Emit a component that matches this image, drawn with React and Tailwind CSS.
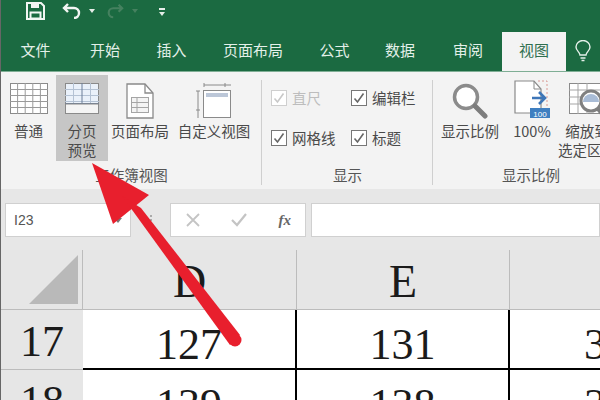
import React from 'react';

const TABS = [
  { label: '文件', w: 'w-[69px]' },
  { label: '开始', w: 'w-[70px]' },
  { label: '插入', w: 'w-[63px]' },
  { label: '页面布局', w: 'w-[100px]' },
  { label: '公式', w: 'w-[63px]' },
  { label: '数据', w: 'w-[68px]' },
  { label: '审阅', w: 'w-[68px]' },
];

function GridIcon({ className, split }) {
  const xs = split ? [8.5, 17, 25.5] : [7.6, 15.2, 22.8, 30.4];
  const w = split ? 34 : 38;
  return (
    <svg width={w} height="31" viewBox={`0 0 ${w} 31`} className={className}>
      <rect x="0.5" y="0.5" width={w - 1} height="30" fill={split ? '#eaf1fa' : '#fff'} stroke="#8a8a8a" />
      {[6, 12, 18, 24].map(y => <line key={y} x1="0" x2={w} y1={y + 0.5} y2={y + 0.5} stroke={split ? '#b4c2d4' : '#9a9a9a'} />)}
      {xs.map((x, i) => <line key={x} x1={x} x2={x} y1="0" y2="31" stroke={split && i === 1 ? '#6d7f99' : split ? '#b4c2d4' : '#9a9a9a'} />)}
      {split && <line x1="0" x2={w} y1="20.5" y2="20.5" stroke="#6d7f99" />}
      {split && <rect x="0.5" y="21" width={w - 1} height="9.5" fill="#f4f4f4" stroke="#8a8a8a" />}
    </svg>
  );
}

function PageIcon() {
  return (
    <svg width="28" height="36" viewBox="0 0 28 36">
      <path d="M1 1h18l8 9v25H1z" fill="#fff" stroke="#8a8a8a" strokeWidth="1.3" />
      <path d="M19 1v9h8" fill="none" stroke="#8a8a8a" strokeWidth="1.3" />
      <rect x="5.5" y="14.5" width="17" height="15" fill="#f4f4f4" stroke="#a5a5a5" />
      <path d="M5 19.5h17M5 24.5h17M11 14v15" stroke="#a5a5a5" />
    </svg>
  );
}

function CustomViewIcon() {
  return (
    <svg width="36" height="36" viewBox="0 0 36 36">
      <path d="M8 2h27M2 8v27M8 0v4M29 0v4M0 8h4M0 27h4" stroke="#8a8a8a" fill="none" />
      <rect x="7.5" y="7.5" width="27" height="27" fill="#fff" stroke="#8a8a8a" />
      <rect x="10" y="10" width="22" height="4" fill="#bcc7d8" />
    </svg>
  );
}

function MagnifierIcon() {
  return (
    <svg width="36" height="36" viewBox="0 0 36 36">
      <circle cx="14" cy="14" r="11.5" fill="#fff" stroke="#8b8b8b" strokeWidth="3.5" />
      <line x1="23" y1="23" x2="33" y2="33" stroke="#7d7d7d" strokeWidth="5" strokeLinecap="round" />
    </svg>
  );
}

function HundredIcon() {
  return (
    <svg width="36" height="38" viewBox="0 0 36 38" className="-mt-[3px]">
      <path d="M1 1h19l7 8v24H1z" fill="#fff" stroke="#8a8a8a" strokeWidth="1.2" />
      <path d="M20 1v8h7" fill="none" stroke="#8a8a8a" />
      <path d="M24 1h9v27" fill="none" stroke="#d99a94" strokeDasharray="2 2" />
      <path d="M18 18h12M25 12l6 6-6 6" fill="none" stroke="#3d76b8" strokeWidth="2.6" />
      <rect x="16" y="28" width="20" height="10" fill="#3f7fc1" />
      <text x="26" y="36.500" fontSize="8" fill="#fff" textAnchor="middle" fontFamily="Liberation Sans">100</text>
    </svg>
  );
}

function ZoomSelectionIcon() {
  return (
    <svg width="36" height="36" viewBox="0 0 36 36" className="shrink-0">
      <rect x="0.5" y="0.5" width="35" height="30" fill="#fff" stroke="#8a8a8a" />
      <path d="M0 7h36M0 14h36M0 21h36M9 0v31M18 0v31" stroke="#a5a5a5" />
      <circle cx="22" cy="18" r="10" fill="#fff" stroke="#808080" strokeWidth="3" />
      <path d="M14 19a8 8 0 0 1 16 0z" fill="#a9bcd6" />
      <line x1="29" y1="26" x2="34" y2="32" stroke="#7d7d7d" strokeWidth="4" />
    </svg>
  );
}

function Check({ disabled }) {
  return (
    <span className={`flex h-[16px] w-[16px] shrink-0 items-center justify-center border bg-white ${disabled ? 'border-[#cfcfcf]' : 'border-[#777]'}`}>
      <svg width="12" height="12" viewBox="0 0 12 12">
        <path d="M1.500 6.500l3 3.500 6-8.500" fill="none" stroke={disabled ? '#c8c8c8' : '#666'} strokeWidth="1.6" />
      </svg>
    </span>
  );
}

function CheckRow({ label, disabled }) {
  return (
    <div className="flex h-[16px] items-center gap-[5px]">
      <Check disabled={disabled} />
      <span className={`text-[14.5px] leading-none ${disabled ? 'text-[#bdbdbd]' : 'text-[#4a4a4a]'}`}>{label}</span>
    </div>
  );
}

function Group({ width, label, border, children }) {
  return (
    <div className={`relative flex shrink-0 flex-col ${width}`}>
      <div className="flex h-[90px] items-start">{children}</div>
      <div className="mt-[1px] text-center text-[14.5px] leading-[18px] text-[#555]">{label}</div>
      {border && <div className="absolute right-0 top-[5px] h-[105px] w-px bg-[#cfcfcf]" />}
    </div>
  );
}

function RibbonBtn({ width, icon, lines, active }) {
  return (
    <div className={`flex h-[86px] shrink-0 flex-col items-center pt-[8px] ${width} ${active ? 'bg-[#c6c6c6]' : ''}`}>
      <div className="flex h-[38px] items-start justify-center">{icon}</div>
      {lines.map(l => <div key={l} className="whitespace-nowrap text-center text-[14.5px] leading-[19px] text-[#4a4a4a]">{l}</div>)}
    </div>
  );
}

function Cell({ children, right, className = '' }) {
  return (
    <div className={`flex items-center justify-center overflow-hidden border-b-2 border-black bg-white pt-[12px] font-['Liberation_Serif',serif] text-[44px] text-[#1b1b1b] ${right ? 'border-r-2' : ''} ${className}`}>
      {children}
    </div>
  );
}

function RowHead({ children }) {
  return (
    <div className="flex items-center justify-center overflow-hidden border-b border-[#bcbcbc] bg-[#e6e6e6] pt-[5px] font-['Liberation_Serif',serif] text-[44px] text-[#1b1b1b]">
      {children}
    </div>
  );
}

export default function App() {
  return (
    <div className="relative h-[400px] w-[600px] overflow-hidden border-l border-[#666] bg-[#e7e7e7] font-['Noto_Sans_CJK_SC','Noto_Sans',sans-serif]">
      {/* title bar */}
      <div className="flex h-[32px] items-start bg-[#1b6a41] pl-[25px] pt-[2px]">
        <svg width="19" height="18" viewBox="0 0 19 18">
          <path d="M1 1h14l3 3v13H1z" fill="none" stroke="#f2f6f3" strokeWidth="2" />
          <rect x="5" y="1" width="8" height="5" fill="#f2f6f3" />
          <rect x="4.500" y="10.500" width="10" height="6" fill="none" stroke="#f2f6f3" strokeWidth="2" />
        </svg>
        <svg width="20" height="17" viewBox="0 0 20 17" className="ml-[17px]">
          <path d="M6 2L2 6l4 4M2 6h10a5 5 0 0 1 0 10" fill="none" stroke="#f2f6f3" strokeWidth="2.4" />
        </svg>
        <span className="ml-[7px] mt-[7px] h-0 w-0 border-x-[3px] border-t-[4px] border-x-transparent border-t-[#e6eee9]" />
        <svg width="18" height="17" viewBox="0 0 20 17" className="ml-[11px]">
          <path d="M14 2l4 4-4 4M18 6H8a5 5 0 0 0 0 10" fill="none" stroke="#45815f" strokeWidth="2.4" />
        </svg>
        <span className="ml-[8px] mt-[7px] h-0 w-0 border-x-[3px] border-t-[4px] border-x-transparent border-t-[#45815f]" />
        <div className="ml-[21px] mt-[6px] flex flex-col items-center gap-[2px]">
          <span className="h-[2px] w-[6px] bg-[#e6eee9]" />
          <span className="h-0 w-0 border-x-[3.5px] border-t-[4px] border-x-transparent border-t-[#e6eee9]" />
        </div>
      </div>

      {/* tabs */}
      <div className="flex h-[39px] items-stretch bg-[#1b6a41] text-[15px] text-[#e4f0e9]">
        {TABS.map(t => (
          <div key={t.label} className={`flex items-center justify-center pb-[2px] ${t.w}`}>{t.label}</div>
        ))}
        <div className="flex w-[64px] items-center justify-center bg-[#f3f3f3] pb-[2px] text-[#2f6f50]">视图</div>
        <div className="flex flex-1 items-center justify-center pb-[2px]">
          <svg width="16" height="22" viewBox="0 0 16 22">
            <path d="M5 15c0-3-4-4-4-8a7 6.500 0 0 1 14 0c0 4-4 5-4 8zM5.500 18h5M6.500 20.500h3" fill="none" stroke="#e4f0e9" strokeWidth="1.4" />
          </svg>
        </div>
      </div>

      {/* ribbon */}
      <div className="flex h-[118px] overflow-hidden border-t border-[#7fae95] bg-[#f3f3f3] pt-[3px]">
        <Group width="w-[261px]" label="工作簿视图" border>
          <div className="flex">
            <RibbonBtn width="w-[55px]" icon={<GridIcon />} lines={['普通']} />
            <RibbonBtn width="w-[52px]" icon={<GridIcon split />} lines={['分页', '预览']} active />
            <RibbonBtn width="w-[64px]" icon={<PageIcon />} lines={['页面布局']} />
            <RibbonBtn width="w-[84px]" icon={<CustomViewIcon />} lines={['自定义视图']} />
          </div>
        </Group>
        <Group width="w-[171px]" label="显示" border>
          <div className="grid grid-cols-[80px_80px] gap-y-[24px] pl-[9px] pt-[15px]">
            <CheckRow label="直尺" disabled />
            <CheckRow label="编辑栏" />
            <CheckRow label="网格线" />
            <CheckRow label="标题" />
          </div>
        </Group>
        <Group width="w-[196px]" label="显示比例">
          <div className="flex">
            <RibbonBtn width="w-[74px]" icon={<MagnifierIcon />} lines={['显示比例']} />
            <RibbonBtn width="w-[50px]" icon={<HundredIcon />} lines={['100%']} />
            <RibbonBtn width="w-[60px]" icon={<ZoomSelectionIcon />} lines={['缩放到', '选定区域']} />
          </div>
        </Group>
      </div>

      {/* formula bar */}
      <div className="flex h-[48px] items-end gap-[5px] pl-[4px]">
        <div className="flex h-[34px] w-[126px] items-center justify-between border border-[#d0d0d0] bg-white px-[8px] font-['Liberation_Sans',sans-serif] text-[14px] text-[#555]">
          I23
          <span className="h-0 w-0 border-x-[4px] border-t-[5px] border-x-transparent border-t-[#777]" />
        </div>
        <div className="flex h-[34px] w-[29px] items-center justify-center">
          <span className="flex flex-col gap-[2px]">
            <span className="h-[2px] w-[2px] bg-[#aaa]" />
            <span className="h-[2px] w-[2px] bg-[#aaa]" />
            <span className="h-[2px] w-[2px] bg-[#aaa]" />
          </span>
        </div>
        <div className="flex h-[34px] w-[136px] items-center justify-between border border-[#d0d0d0] bg-white pl-[15px] pr-[14px]">
          <svg width="14" height="14" viewBox="0 0 14 14"><path d="M1 1l12 12M13 1L1 13" stroke="#c4c4c4" strokeWidth="1.8" /></svg>
          <svg width="16" height="14" viewBox="0 0 16 14"><path d="M1 7l5 5L15 1" fill="none" stroke="#c4c4c4" strokeWidth="2.2" /></svg>
          <span className="font-['Liberation_Serif',serif] text-[15px] font-bold italic leading-none text-[#666]">fx</span>
        </div>
        <div className="h-[34px] flex-1 border border-[#d0d0d0] bg-white" />
      </div>

      {/* sheet */}
      <div className="mt-[13px] grid grid-cols-[82px_214px_213px_1fr] grid-rows-[60px_60px_60px]">
        <div className="flex items-end justify-end border-b border-r border-[#bcbcbc] bg-[#e6e6e6] pb-[5px] pr-[4px]">
          <div className="h-0 w-0 border-b-[49px] border-l-[49px] border-b-[#b9b9b9] border-l-transparent" />
        </div>
        <div className="flex items-center justify-center border-b border-r border-[#bcbcbc] bg-[#e6e6e6] pt-[4px] font-['Liberation_Serif',serif] text-[46px] text-[#1b1b1b]">D</div>
        <div className="flex items-center justify-center border-b border-r border-[#bcbcbc] bg-[#e6e6e6] pt-[4px] font-['Liberation_Serif',serif] text-[46px] text-[#1b1b1b]">E</div>
        <div className="border-b border-[#bcbcbc] bg-[#e6e6e6]" />

        <RowHead>17</RowHead>
        <Cell right>127</Cell>
        <Cell right>131</Cell>
        <Cell className="justify-start pl-[74px]">3</Cell>

        <RowHead>18</RowHead>
        <Cell right>139</Cell>
        <Cell right>138</Cell>
        <Cell className="justify-start pl-[74px]">3</Cell>
      </div>

      {/* red annotation arrow */}
      <svg width="600" height="400" viewBox="0 0 600 400" className="pointer-events-none absolute left-[-1px] top-0">
        <polygon points="92,163 149,195 113,224" fill="#e81f2d" />
        <polygon points="122,196 141,208 240,335 230,345" fill="#e81f2d" />
        <circle cx="235" cy="340" r="6.500" fill="#e81f2d" />
      </svg>
    </div>
  );
}
